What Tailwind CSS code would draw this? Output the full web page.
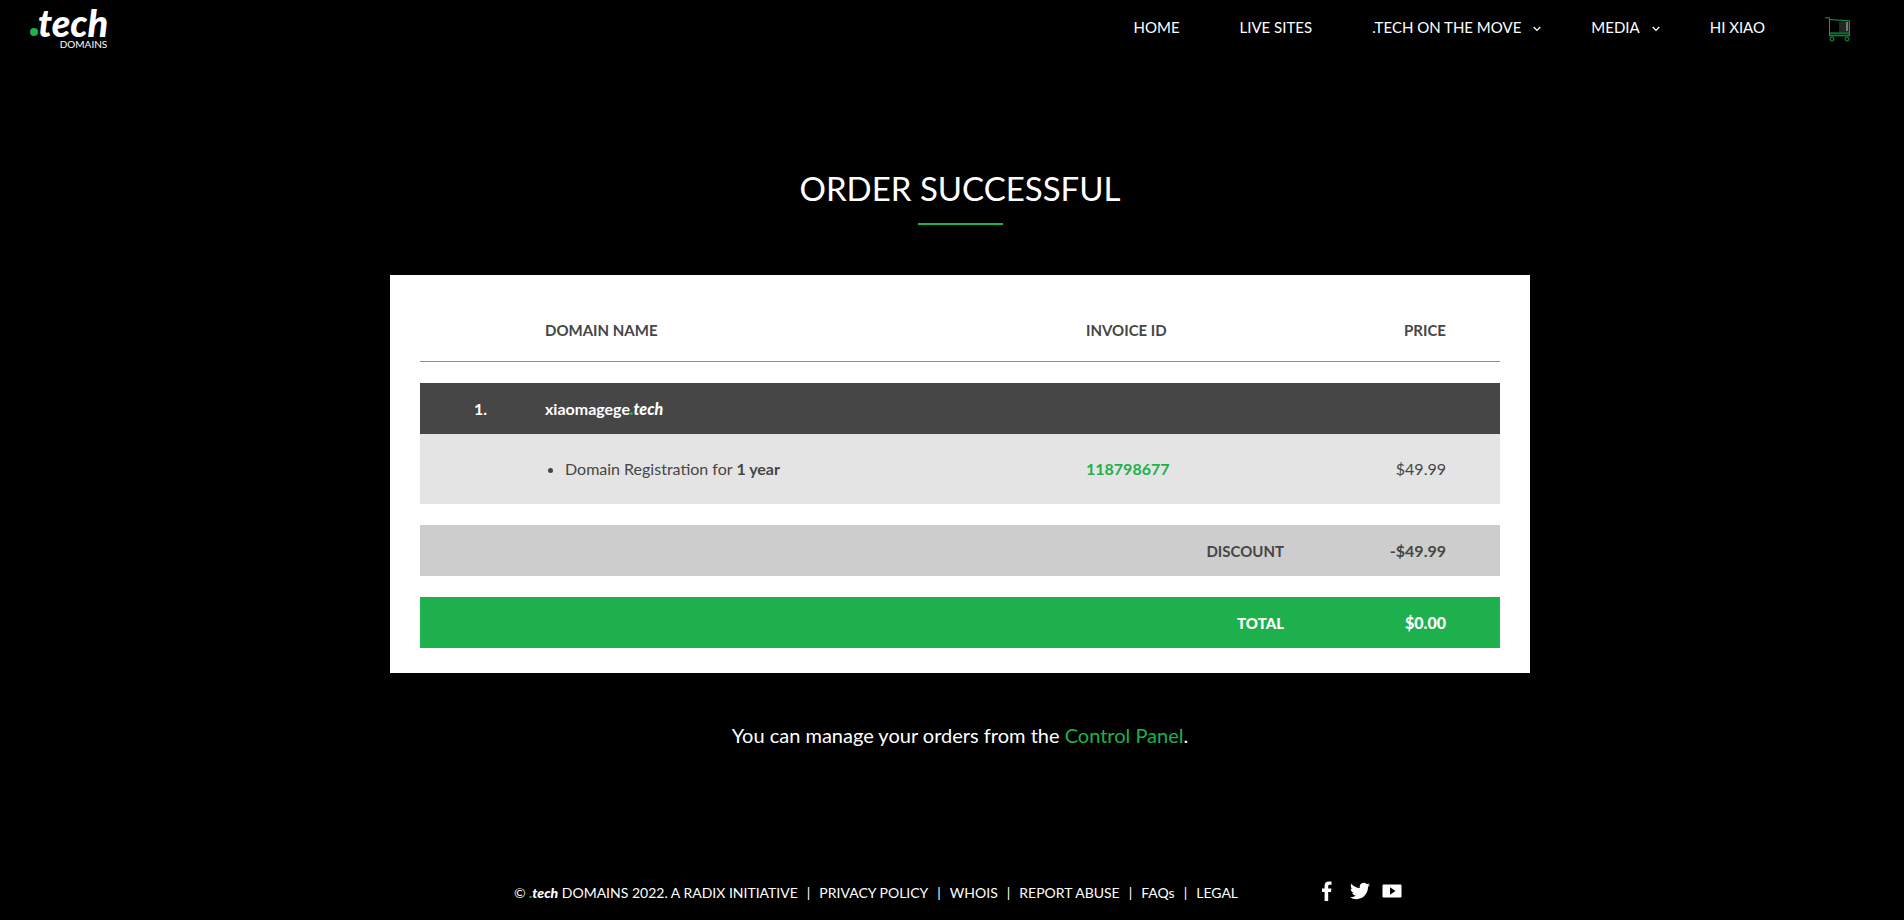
<!DOCTYPE html>
<html lang="en">
<head>
    <meta charset="UTF-8">
    <meta name="viewport" content="width=device-width, initial-scale=1.0">
    <title>Order Successful | .tech Domains</title>
    <script src="https://cdn.jsdelivr.net/npm/@tailwindcss/browser@4"></script>
</head>
<body class="min-h-screen flex flex-col bg-black text-white font-['Lato',sans-serif]">

    <header class="flex items-start justify-between pl-[30px] pr-[54px]">
        <a href="#" class="flex items-end pt-1" aria-label=".tech domains">
            <span class="w-2 h-2 mb-3 rounded-full bg-[#1eb04c]"></span>
            <span class="flex flex-col items-end">
                <span class="text-[38px] leading-9 font-black italic">tech</span>
                <span class="text-[10px] leading-2 pr-px">DOMAINS</span>
            </span>
        </a>
        <nav class="flex items-center gap-[60px] h-[54px] text-[15px] leading-5">
            <a href="#">HOME</a>
            <a href="#">LIVE SITES</a>
            <a href="#" class="flex items-center gap-3">.TECH ON THE MOVE
                <svg class="w-2 h-2 mt-1" viewBox="0 0 8 8" fill="none" stroke="currentColor" stroke-width="1.3"><path d="M0.7 2 4 5.4 7.3 2"/></svg>
            </a>
            <a href="#" class="flex items-center gap-3 -ml-[10px]">MEDIA
                <svg class="w-2 h-2 mt-1" viewBox="0 0 8 8" fill="none" stroke="currentColor" stroke-width="1.3"><path d="M0.7 2 4 5.4 7.3 2"/></svg>
            </a>
            <a href="#" class="-ml-[10px]">HI XIAO</a>
            <a href="#" aria-label="Cart">
                <svg class="w-[25px] h-[25px] mt-1" viewBox="0 0 25 25" fill="none" stroke="#12a04a" stroke-width="1">
                    <path d="M14 4.5h10v11H14z" fill="#262626" stroke="none"/>
                    <path d="M21 5h2v9h-2z" fill="#777" stroke="none"/>
                    <path d="M4 16h20v3H4z" fill="#053517" stroke="none"/>
                    <path d="M0 .8h4.5v18h20M4.5 2.5l20 1.3V16h-20M24.500 16v3"/>
                    <circle cx="7" cy="22" r="2"/>
                    <circle cx="22" cy="22" r="2"/>
                </svg>
            </a>
        </nav>
    </header>

    <main class="flex flex-col items-center pl-4 pt-[112px]">
        <h1 class="text-[33px] leading-11">ORDER SUCCESSFUL</h1>
        <div class="w-[85px] h-[2px] mt-[13px] bg-[#1eb04c]"></div>

        <div class="w-full max-w-[1140px] mt-[50px] px-[30px] py-[25px] bg-white">
            <table class="w-full table-fixed text-[15px] leading-5 text-[#464646]">
                <colgroup>
                    <col class="w-[125px]">
                    <col>
                    <col class="w-[198px]">
                    <col class="w-[216px]">
                </colgroup>
                <thead>
                    <tr class="h-[61px] border-b border-[#8f8f8f] text-left">
                        <td></td>
                        <th>DOMAIN NAME</th>
                        <th>INVOICE ID</th>
                        <th class="pr-[54px] text-right">PRICE</th>
                    </tr>
                </thead>
                <tbody class="text-base leading-5">
                    <tr class="h-[22px]"><td colspan="4"></td></tr>
                    <tr class="h-[51px] bg-[#464646] text-white font-bold">
                        <td class="pl-[54px]">1.</td>
                        <td colspan="3">xiaomagege<span class="font-black italic"><span class="text-[#1eb04c]">.</span>tech</span></td>
                    </tr>
                    <tr class="h-[70px] bg-[#e4e4e4]">
                        <td></td>
                        <td>
                            <ul class="list-disc pl-5">
                                <li>Domain Registration for <b>1 year</b></li>
                            </ul>
                        </td>
                        <td><a href="#" class="font-bold text-[#1eb04c]">118798677</a></td>
                        <td class="pr-[54px] text-right">$49.99</td>
                    </tr>
                    <tr class="h-[21px]"><td colspan="4"></td></tr>
                </tbody>
                <tfoot class="font-bold text-right">
                    <tr class="h-[51px] bg-[#cdcdcd]">
                        <td colspan="3">DISCOUNT</td>
                        <td class="pr-[54px] text-base leading-5">-$49.99</td>
                    </tr>
                    <tr class="h-[21px]"><td colspan="4"></td></tr>
                    <tr class="h-[51px] bg-[#1eb04c] text-white font-black">
                        <td colspan="3">TOTAL</td>
                        <td class="pr-[54px] text-base leading-5">$0.00</td>
                    </tr>
                </tfoot>
            </table>
        </div>

        <p class="mt-[50px] text-xl leading-6">You can manage your orders from the <a href="#" class="text-[#1eb04c]">Control Panel</a>.</p>
    </main>

    <footer class="flex items-center justify-center gap-[84px] mt-auto pl-3 pb-[15px] text-sm leading-5">
        <div class="flex gap-[9px]">
            <span>© <span class="font-black italic"><span class="text-[#1eb04c]">.</span>tech</span> DOMAINS 2022. A RADIX INITIATIVE</span>
            <span>|</span>
            <a href="#">PRIVACY POLICY</a>
            <span>|</span>
            <a href="#">WHOIS</a>
            <span>|</span>
            <a href="#">REPORT ABUSE</a>
            <span>|</span>
            <a href="#">FAQs</a>
            <span>|</span>
            <a href="#">LEGAL</a>
        </div>
        <div class="flex items-center pb-1">
            <a href="#" aria-label="Facebook">
                <svg class="w-[10px] h-5" viewBox="0 0 10 20" fill="currentColor"><path d="M2.6 20v-9H0V7.4h2.6V4.6C2.600 1.800 4.200.4 6.700.4 8 .4 9.300.5 9.500.6v3.200H7.800C6.500 3.800 6.200 4.500 6.200 5.400v2h3.200L9 11H6.200v9z"/></svg>
            </a>
            <a href="#" aria-label="Twitter" class="ml-[18px]">
                <svg class="w-5 h-5" viewBox="0 0 24 24" fill="currentColor"><path d="M23.953 4.570a10 10 0 0 1-2.825.775 4.958 4.958 0 0 0 2.163-2.723c-.951.555-2.005.959-3.127 1.184a4.920 4.920 0 0 0-8.384 4.482C7.690 8.095 4.067 6.130 1.640 3.162a4.822 4.822 0 0 0-.666 2.475c0 1.710.870 3.213 2.188 4.096a4.904 4.904 0 0 1-2.228-.616v.060a4.923 4.923 0 0 0 3.946 4.827 4.996 4.996 0 0 1-2.212.085 4.936 4.936 0 0 0 4.604 3.417 9.867 9.867 0 0 1-6.102 2.105c-.390 0-.779-.023-1.170-.067a13.995 13.995 0 0 0 7.557 2.209c9.053 0 13.998-7.496 13.998-13.985 0-.210 0-.420-.015-.630A9.935 9.935 0 0 0 24 4.590z"/></svg>
            </a>
            <a href="#" aria-label="YouTube" class="ml-3">
                <svg class="w-5 h-5" viewBox="0 0 20 20" fill="currentColor" fill-rule="evenodd"><path d="M1.500 3.500h17a1 1 0 0 1 1 1v11a1 1 0 0 1-1 1h-17a1 1 0 0 1-1-1v-11a1 1 0 0 1 1-1zM8 6.200v7.600l5.500-3.800z"/></svg>
            </a>
        </div>
    </footer>

</body>
</html>
